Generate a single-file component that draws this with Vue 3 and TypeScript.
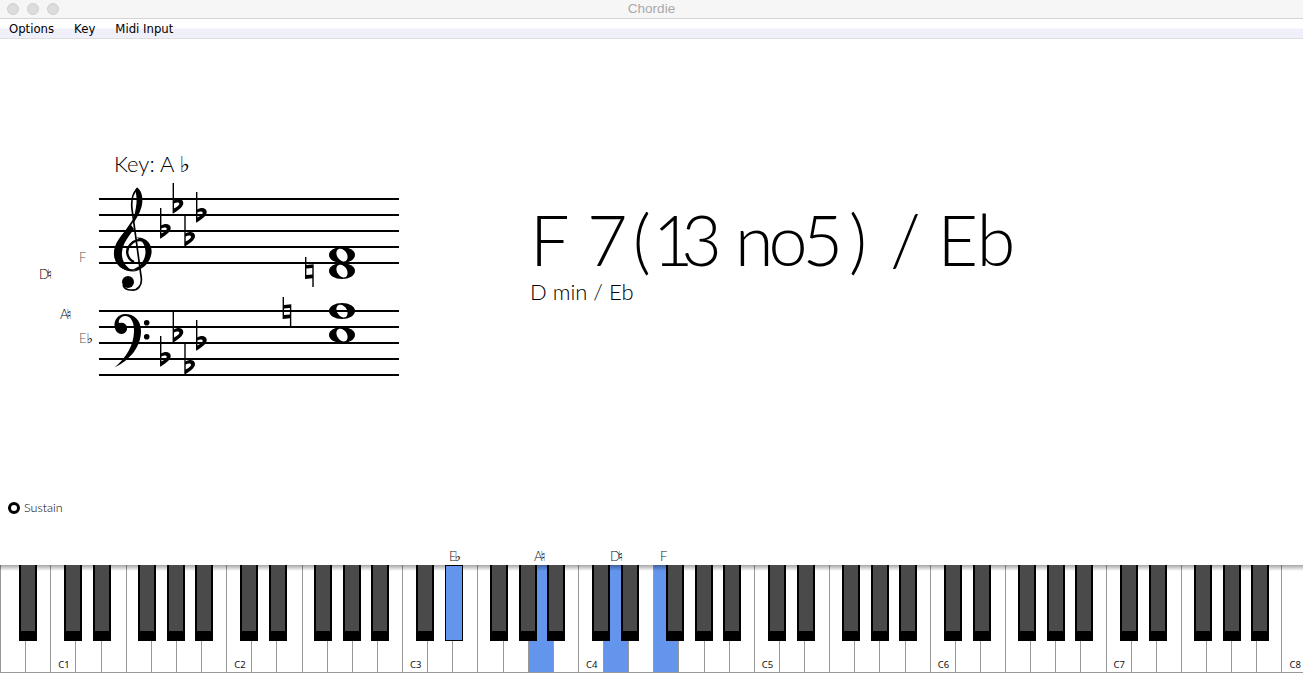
<template>
  <div class="window">
    <header class="titlebar">
      <div class="traffic">
        <span v-for="n in 3" :key="n" class="light"></span>
      </div>
      <span class="app-title">Chordie</span>
    </header>

    <nav class="menubar">
      <span v-for="item in menu" :key="item" class="menu-item">{{ item }}</span>
    </nav>

    <main class="stage">
      <section class="score-row">
        <svg class="score" width="400" height="260" viewBox="0 140 400 260">
          <text x="114" y="172" class="key-name">Key: A <tspan class="acc-strong">♭</tspan></text>

          <line v-for="y in staffLines" :key="y" x1="99" x2="399" :y1="y" :y2="y" class="staff-line" />

          <!-- treble clef -->
          <g>
            <path class="clef-curl" d="M134 262 C127 259 125 250 130 245 C134 240 140 239 144 241" />
            <path class="clef-thin" d="M144 241 C153 246 151 262 134 270 C122 271 115 263 115 253 C116 241 128 230 134 219 C139 210 141 200 137 189 C133 193 131 200 132 209 L141 276 C143 286 137 291 131 290 C127 290 124 288 123 285" />
            <path d="M131 225 C120 236 113 245 114 255 C115 265 123 272 135 271.500 C127 269 121 261 122 252 C123 243 129 236 134 229 Z" />
            <path d="M136 237.500 C147 236.500 152.500 245 151.500 253 C150.500 262 143 270 134 271.500 C140 266 145.500 260 145.500 252 C145.500 245 142 240 136 237.500 Z" />
            <path d="M137 187.500 C142.500 191 143.500 200 141.500 207 C139.500 214 136 219 133 224 C134 216 136 209 136.500 203 C137 197 136 193 135 190 Z" />
            <circle cx="128" cy="282" r="6" />
          </g>

          <!-- bass clef -->
          <g>
            <path d="M114.500 367.500 C130 360 141 347 141 331 C141 320 134 314 125 314 C119 314 114 319 114.500 326 C115 331 118 334 121.500 334 C125 334 127.500 331 127 327.500 C126.500 324 123.500 322 119 323 C118 320 121 316 125 316 C131 316 134 322 134 331 C134 345 126 358 114.500 367.500 Z" />
            <circle cx="146.700" cy="322.700" r="2.800" />
            <circle cx="146.700" cy="336.700" r="2.800" />
          </g>

          <path
            v-for="f in flats"
            :key="f.x + '-' + f.y"
            class="glyph"
            :transform="`translate(${f.x} ${f.y})`"
            d="M-0.700 0 H0.700 V17.500 C4 15 10 15.500 10 20 C10 24 5 27 0 30.500 H-0.700 Z M0.700 20.500 V25.500 C3 24.500 6 22.500 6 20.800 C6 19.200 3 19 0.700 20.500 Z"
          />

          <path
            v-for="n in naturals"
            :key="n.x"
            class="glyph"
            :transform="`translate(${n.x} ${n.y})`"
            d="M-0.700 0 H0.700 V8 L8 7.300 V30 H6.600 V21.300 L-0.700 22 Z M0.700 11.500 V18 L6.600 17.500 V11 Z"
          />

          <path
            v-for="n in noteheads"
            :key="n"
            class="glyph"
            :transform="`translate(342 ${n})`"
            d="M-13 0 A13 8 0 1 0 13 0 A13 8 0 1 0 -13 0 Z M-5 -4.500 C-7 -1 -4 5 1 6.500 C5 7 6.500 3 5 -1 C3 -6 -3 -8 -5 -4.500 Z"
          />

          <text v-for="l in staffLabels" :key="l.name" :x="l.x" :y="l.y" class="note-label" :class="l.tone">{{ l.name }}<tspan class="acc" :dx="l.gap">{{ l.acc }}</tspan></text>
        </svg>

        <div class="chord">
          <div class="chord-name">F 7<span class="paren-open">(</span><span class="digits">13</span> <span class="tail">no5</span><span class="paren-close">)</span> <span class="slash">/</span> <span class="bass">Eb</span></div>
          <div class="chord-alt">D min / Eb</div>
        </div>
      </section>

      <div class="sustain">
        <span class="pedal"></span>
        <span>Sustain</span>
      </div>

      <div class="key-labels">
        <span v-for="l in keyLabels" :key="l.name" class="key-label" :style="{ left: l.x + 'px' }">{{ l.name }}<span class="acc">{{ l.acc }}</span></span>
      </div>
    </main>

    <section class="keyboard">
      <div
        v-for="(k, i) in whiteKeys"
        :key="i"
        class="white-key"
        :class="{ active: k.active }"
      >
        <span v-if="k.label" class="octave">{{ k.label }}</span>
      </div>
      <div class="top-shade"></div>
      <div
        v-for="k in blackKeys"
        :key="k.x"
        class="black-key"
        :class="{ active: k.active }"
        :style="{ left: k.x + 'px' }"
      ></div>
    </section>
  </div>
</template>

<script setup lang="ts">
const menu = ['Options', 'Key', 'Midi Input']

const staffLines = [199, 215, 231, 247, 263, 311, 327, 343, 359, 375]

const flats = [
  { x: 160.7, y: 208 },
  { x: 173.3, y: 183 },
  { x: 185, y: 216 },
  { x: 196.7, y: 192 },
  { x: 160.7, y: 336 },
  { x: 173.3, y: 312 },
  { x: 185, y: 344 },
  { x: 196.7, y: 320 },
]

const naturals = [
  { x: 305.7, y: 257 },
  { x: 283.3, y: 297 },
]

const noteheads = [255, 271, 311, 335]

const staffLabels = [
  { name: 'F', acc: '', x: 79, y: 262, tone: 'soft', gap: 0 },
  { name: 'D', acc: '♮', x: 39, y: 279, tone: '', gap: -2 },
  { name: 'A', acc: '♮', x: 60, y: 319, tone: '', gap: -2 },
  { name: 'E', acc: '♭', x: 79, y: 343, tone: 'soft', gap: 0 },
]

const keyLabels = [
  { name: 'E', acc: '♭', x: 449 },
  { name: 'A', acc: '♮', x: 534 },
  { name: 'D', acc: '♮', x: 610 },
  { name: 'F', acc: '', x: 660 },
]

// A0 is the first white key, the screenshot cuts off right after C8
const activeWhite = [21, 24, 26]
const whiteKeys = Array.from({ length: 52 }, (_, i) => ({
  active: activeWhite.includes(i),
  label: (i - 2) % 7 === 0 ? 'C' + ((i - 2) / 7 + 1) : '',
}))

const blackKeys: { x: number; active: boolean }[] = [{ x: 19, active: false }]
for (let octave = 0; octave < 7; octave++) {
  for (const base of [64, 93, 138, 167, 195]) {
    const x = base + octave * 176
    blackKeys.push({ x, active: x === 445 })
  }
}
</script>

<style>
html,
body {
  margin: 0;
  background: #fff;
}
</style>

<style scoped>
.window {
  width: 1303px;
  height: 673px;
  display: flex;
  flex-direction: column;
  overflow: hidden;
  background: #fff;
  font-family: "Lato", "DejaVu Sans", sans-serif;
  color: #000;
}

.titlebar {
  height: 18px;
  flex: none;
  display: flex;
  align-items: center;
  justify-content: center;
  position: relative;
  background: #f6f6f6;
  border-bottom: 1px solid #d4d4d4;
}

.traffic {
  position: absolute;
  left: 7px;
  top: 3px;
  display: flex;
  gap: 8px;
}

.light {
  width: 12px;
  height: 12px;
  border-radius: 50%;
  background: #dcdcdc;
  border: 0.5px solid #d0d0d0;
  box-sizing: border-box;
}

.app-title {
  font-family: "Liberation Sans", sans-serif;
  font-size: 13.5px;
  line-height: 16px;
  color: #a9a9a9;
}

.menubar {
  height: 19px;
  flex: none;
  display: flex;
  gap: 20px;
  padding-left: 9px;
  align-items: center;
  background: linear-gradient(#fff 0, #fff 9px, #f0f0fb 10px, #f0f0fb 100%);
  border-bottom: 1px solid #dedede;
  font-family: "DejaVu Sans", sans-serif;
  font-size: 11.7px;
}

.stage {
  flex: 1;
  position: relative;
  display: flex;
  flex-direction: column;
}

.score-row {
  display: flex;
  margin-top: 101px;
}

.score {
  flex: none;
}

.score path,
.score circle {
  fill: #000;
}

.score .clef-thin {
  fill: none;
  stroke: #000;
  stroke-width: 1.7;
}

.score .clef-curl {
  fill: none;
  stroke: #000;
  stroke-width: 2.4;
}

.score .glyph {
  fill-rule: evenodd;
}

.staff-line {
  stroke: #000;
  stroke-width: 2;
}

.key-name {
  font-size: 22px;
  font-weight: 300;
  fill: #000;
}

.acc-strong {
  font-weight: 700;
  fill: #000;
}

.note-label {
  font-size: 13px;
  font-weight: 300;
  fill: #000;
}

.note-label.soft {
  fill: #555;
}

.note-label .acc {
  font-size: 14px;
  font-weight: 700;
  fill: #000;
}

.chord {
  margin-left: 130px;
  padding-top: 57px;
}

.chord-name {
  font-size: 70px;
  font-weight: 300;
  line-height: 84px;
  white-space: nowrap;
}

.paren-open {
  margin: 0 2px 0 5px;
}

.digits {
  letter-spacing: -12px;
}

.tail {
  letter-spacing: -5px;
  margin-left: 6px;
}

.paren-close {
  margin-left: 11px;
}

.slash {
  margin-left: 4px;
}

.bass {
  margin-left: -2px;
  letter-spacing: -1px;
}

.chord-alt {
  font-size: 22px;
  font-weight: 300;
  line-height: 26px;
  margin-top: -2px;
}

.sustain {
  display: flex;
  align-items: center;
  gap: 4px;
  margin-top: 100px;
  padding-left: 8px;
  font-size: 12.5px;
  font-weight: 300;
}

.pedal {
  width: 12px;
  height: 12px;
  box-sizing: border-box;
  border: 3px solid #000;
  border-radius: 50%;
}

.key-labels {
  position: relative;
  height: 16px;
  margin-top: 32px;
}

.key-label {
  position: absolute;
  top: 0;
  font-size: 13px;
  font-weight: 300;
  color: #111;
}

.key-label .acc {
  font-size: 14px;
  font-weight: 700;
  color: #000;
  margin-left: -2px;
}

.keyboard {
  position: relative;
  height: 108px;
  flex: none;
  display: flex;
  overflow: hidden;
  box-sizing: border-box;
  border-bottom: 1px solid #999;
}

.white-key {
  width: 25.14px;
  flex: none;
  box-sizing: border-box;
  position: relative;
  border-left: 1px solid #999;
}

.white-key.active {
  background: #6495ed;
}

.octave {
  position: absolute;
  left: 7px;
  bottom: 1px;
  font-family: "Noto Sans", sans-serif;
  font-size: 9.5px;
  color: #111;
}

.top-shade {
  position: absolute;
  left: 0;
  right: 0;
  top: 0;
  height: 6px;
  background: linear-gradient(rgba(0, 0, 0, 0.35), rgba(0, 0, 0, 0));
}

.black-key {
  position: absolute;
  top: 0;
  width: 18px;
  height: 76px;
  box-sizing: border-box;
  background: #4a4a4a;
  border: solid #000;
  border-width: 0 2px 10px;
}

.black-key.active {
  background: #6495ed;
  border-width: 1px;
}
</style>
